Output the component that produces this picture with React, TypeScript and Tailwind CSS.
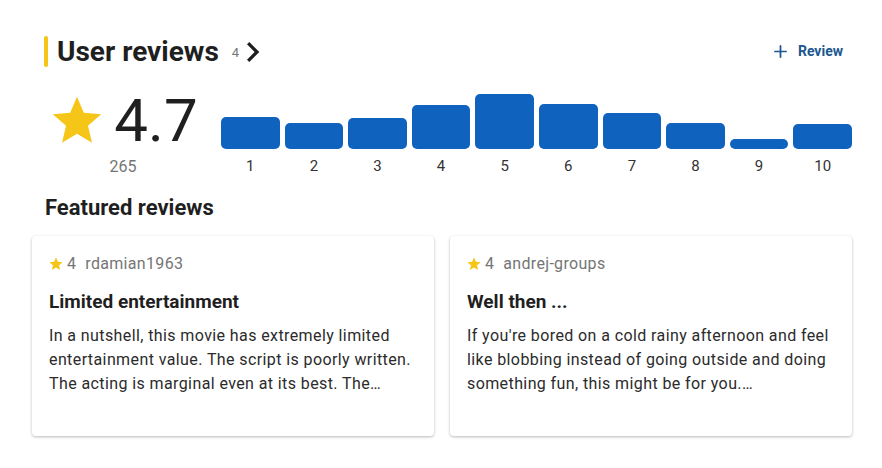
import { Plus } from 'lucide-react';

const STAR = 'M12 17.27L18.18 21l-1.64-7.03L22 9.24l-7.19-.61L12 2 9.19 8.63 2 9.24l5.46 4.73L5.82 21z';

const histogram = [32, 26, 31, 44, 55, 45, 36, 26, 10, 25];

const reviews = [
    {
        rating: 4,
        author: 'rdamian1963',
        title: 'Limited entertainment',
        body: 'In a nutshell, this movie has extremely limited entertainment value. The script is poorly written. The acting is marginal even at its best. The…',
    },
    {
        rating: 4,
        author: 'andrej-groups',
        title: 'Well then ...',
        body: "If you're bored on a cold rainy afternoon and feel like blobbing instead of going outside and doing something fun, this might be for you.…",
    },
];

function Star({ className }: { className?: string }) {
    return (
        <svg viewBox="0 0 24 24" className={className} fill="#f5c518">
            <path d={STAR} />
        </svg>
    );
}

function ReviewCard({ rating, author, title, body }: (typeof reviews)[number]) {
    return (
        <div className="h-[200px] rounded-[4px] bg-white px-[17px] pt-[16px] shadow-[0_1px_3px_rgba(0,0,0,0.28)]">
            <div className="flex items-center text-[16px] leading-[24px] tracking-[0.02em] text-[#757575]">
                <Star className="-ml-[1px] mr-[3px] h-[16px] w-[16px]" />
                <span>{rating}</span>
                <span className="ml-[9px]">{author}</span>
            </div>
            <h3 className="mt-[12px] text-[19px] font-bold leading-[28px] text-[#1f1f1f]">{title}</h3>
            <p className="mt-[8px] line-clamp-3 text-[16px] leading-[24px] tracking-[0.025em] text-[#2b2b2b]">{body}</p>
        </div>
    );
}

export default function App() {
    return (
        <div className="h-[468px] w-[882px] bg-white font-['Roboto',sans-serif]">
            <div className="ml-[32px] w-[820px] pt-[36px]">
                {/* Header */}
                <div className="flex items-center pl-[12px]">
                    <div className="h-[31px] w-[4px] rounded-full bg-[#f5c518]" />
                    <h2 className="ml-[9px] text-[28px] font-bold leading-[31px] text-[#1f1f1f]">User reviews</h2>
                    <span className="ml-[13px] mt-[2px] text-[13px] text-[#757575]">4</span>
                    <svg viewBox="8 6 8.4 12" className="ml-[7px] h-[20px] w-[14px]" fill="#1f1f1f">
                        <path d="M10 6L8.59 7.41 13.17 12l-4.58 4.59L10 18l6-6z" />
                    </svg>
                    <button className="ml-auto mr-[9px] flex items-center gap-[8px] text-[14px] font-bold text-[#1b5790]">
                        <Plus className="h-[19px] w-[19px]" strokeWidth={2.2} />
                        Review
                    </button>
                </div>

                {/* Rating + histogram */}
                <div className="mt-[24px] flex items-start">
                    <div className="ml-[10px] flex w-[162px] flex-col items-center">
                        <div className="flex items-center">
                            <Star className="h-[58px] w-[58px]" />
                            <span className="ml-[8px] text-[60px] leading-[60px] text-[#1f1f1f]">4.7</span>
                        </div>
                        <span className="mt-[6px] text-[16px] leading-[20px] text-[#757575]">265</span>
                    </div>
                    <div className="ml-[17px] flex flex-1 gap-[5px]">
                        {histogram.map((h, i) => (
                            <div key={i} className="flex flex-1 flex-col items-center">
                                <div className="flex h-[58px] w-full items-end">
                                    <div className="w-full rounded-[5px] bg-[#0f62be]" style={{ height: h }} />
                                </div>
                                <span className="mt-[7px] text-[15px] leading-[20px] text-[#333]">{i + 1}</span>
                            </div>
                        ))}
                    </div>
                </div>

                {/* Featured */}
                <h2 className="ml-[13px] mt-[17px] text-[22px] font-bold leading-[28px] text-[#1f1f1f]">Featured reviews</h2>
                <div className="mt-[14px] grid grid-cols-2 gap-[16px]">
                    {reviews.map(r => (
                        <ReviewCard key={r.author} {...r} />
                    ))}
                </div>
            </div>
        </div>
    );
}
